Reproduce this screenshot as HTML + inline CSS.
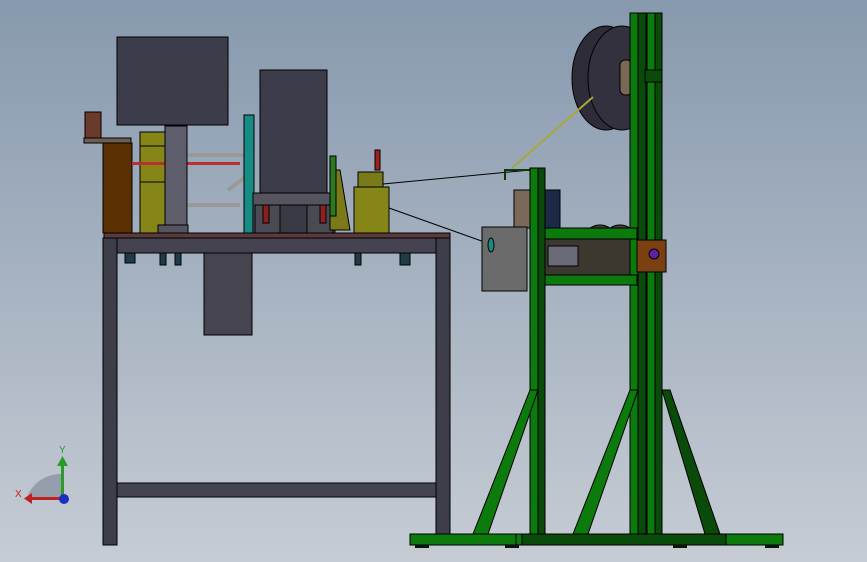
<!DOCTYPE html>
<html><head><style>
html,body{margin:0;padding:0;width:867px;height:562px;overflow:hidden}
body{background:linear-gradient(#8799ae,#c6ccd4);}
svg{position:absolute;left:0;top:0}
</style></head><body>
<svg width="867" height="562" viewBox="0 0 867 562" stroke="#000" stroke-width="1">
<!-- table -->
<rect x="204" y="250" width="48" height="85" fill="#45444f"/>
<rect x="104" y="237" width="346" height="16" fill="#44434f"/>
<rect x="103" y="238" width="14" height="307" fill="#3e3d4a"/>
<rect x="436" y="238" width="14" height="307" fill="#3e3d4a"/>
<rect x="117" y="483" width="319" height="14" fill="#44434f"/>
<rect x="104" y="233" width="346" height="5" fill="#5a3a3c"/>
<g fill="#1f3c44"><rect x="125" y="253" width="10" height="10"/><rect x="160" y="253" width="6" height="12"/><rect x="175" y="253" width="6" height="12"/><rect x="355" y="253" width="6" height="12"/><rect x="400" y="253" width="10" height="12"/></g>
<!-- left assembly -->
<rect x="85" y="112" width="16" height="28" fill="#6a3a2c"/>
<rect x="84" y="138" width="47" height="5" fill="#6e5e50"/>
<rect x="103" y="143" width="29" height="90" fill="#5a3003"/>
<rect x="140" y="132" width="47" height="101" fill="#858518"/>
<line x1="140" y1="146" x2="187" y2="146"/><line x1="140" y1="182" x2="187" y2="182"/>
<rect x="132" y="162" width="108" height="3" fill="#b83030" stroke="none"/>
<rect x="165" y="126" width="22" height="107" fill="#5d5d6b"/>
<rect x="158" y="225" width="30" height="8" fill="#55555f"/>
<rect x="117" y="37" width="111" height="88" fill="#3d3c4a"/>
<path d="M188 155 L245 155 M188 205 L240 205 M228 190 L248 175" stroke="#999" stroke-width="4"/>
<!-- cabinet -->
<rect x="244" y="115" width="10" height="118" fill="#168c84"/>
<rect x="253" y="193" width="82" height="40" fill="#55545f"/>
<rect x="255" y="205" width="78" height="28" fill="#4a4a55"/>
<rect x="263" y="205" width="6" height="18" fill="#8a2020"/><rect x="320" y="205" width="6" height="18" fill="#8a2020"/>
<rect x="280" y="205" width="27" height="28" fill="#3a3a44"/>
<rect x="260" y="70" width="67" height="123" fill="#3d3c4a"/>
<!-- right of cabinet -->
<polygon points="330,170 340,170 350,230 330,230" fill="#7a7a18"/>
<rect x="330" y="156" width="6" height="60" fill="#2a7a20"/>
<rect x="358" y="172" width="25" height="15" fill="#7a7a18"/>
<rect x="375" y="150" width="5" height="20" fill="#a02020"/>
<rect x="354" y="187" width="35" height="46" fill="#858518"/>
<line x1="383" y1="184" x2="530" y2="170"/>
<line x1="389" y1="208" x2="490" y2="244"/>
<!-- right machine -->
<rect x="514" y="190" width="33" height="38" fill="#7a6858"/>
<rect x="545" y="190" width="15" height="40" fill="#1c2a48"/>
<ellipse cx="600" cy="255" rx="22" ry="30" fill="#4a4036"/>
<ellipse cx="620" cy="255" rx="22" ry="30" fill="#4a4036"/>
<rect x="545" y="238" width="88" height="37" fill="#3c3830"/>
<rect x="548" y="246" width="30" height="20" fill="#6a6a78"/>
<rect x="482" y="227" width="45" height="64" fill="#6b6b6b"/>
<ellipse cx="491" cy="245" rx="3" ry="7" fill="#1a8a80"/>
<!-- spool -->
<ellipse cx="606" cy="78" rx="34" ry="52" fill="#2e2c38"/>
<ellipse cx="622" cy="78" rx="34" ry="52" fill="#33313e"/>
<rect x="620" y="60" width="12" height="35" fill="#7a6a55" rx="5"/>
<line x1="512" y1="168" x2="593" y2="97" stroke="#a8a838" stroke-width="2"/>
<path d="M505 180 L505 170 L540 170" fill="none" stroke="#0a3a0a" stroke-width="2"/>
<!-- green frame -->
<g fill="#0d7a0d">
<rect x="530" y="168" width="8" height="367"/><rect x="538" y="168" width="7" height="367" fill="#0a4a0a"/>
<rect x="630" y="13" width="8" height="522"/><rect x="638" y="13" width="8" height="522" fill="#0a4a0a"/>
<rect x="647" y="13" width="8" height="522"/><rect x="655" y="13" width="7" height="522" fill="#0a4a0a"/>
<rect x="545" y="228" width="92" height="11"/><rect x="545" y="275" width="92" height="10"/>
<rect x="645" y="70" width="17" height="12" fill="#0a4a0a"/>
<polygon points="530,390 538,390 488,534 473,534"/>
<polygon points="630,390 638,390 588,534 573,534"/>
<polygon points="662,390 670,390 720,534 705,534" fill="#0a4a0a"/>
<rect x="410" y="534" width="106" height="11"/><rect x="516" y="534" width="6" height="11"/>
<rect x="522" y="534" width="204" height="11" fill="#0a4a0a"/><rect x="726" y="534" width="57" height="11"/>
</g>
<rect x="637" y="240" width="29" height="32" fill="#7a4012"/>
<circle cx="654" cy="254" r="5" fill="#6020a0"/>
<g fill="#111" stroke="none"><rect x="415" y="545" width="14" height="3"/><rect x="505" y="545" width="14" height="3"/><rect x="673" y="545" width="14" height="3"/><rect x="765" y="545" width="14" height="3"/></g>
<!-- axis triad -->
<g stroke="none">
<path d="M62 474 A36 36 0 0 0 26 500 L62 500 Z" fill="#7a8494" opacity=".6"/>
<rect x="61" y="464" width="3" height="36" fill="#2a9a2a"/><polygon points="57,466 62.5,456 68,466" fill="#2a9a2a"/>
<rect x="30" y="497" width="32" height="3" fill="#c02020"/><polygon points="32,493 24,498.5 32,504" fill="#c02020"/>
<circle cx="64" cy="499" r="5" fill="#1a30c0"/>
<text x="59" y="453" font-family="Liberation Sans,sans-serif" font-size="10" fill="#2a9a2a">Y</text>
<text x="15" y="497" font-family="Liberation Sans,sans-serif" font-size="10" fill="#c02020">X</text>
</g>
</svg>
</body></html>
